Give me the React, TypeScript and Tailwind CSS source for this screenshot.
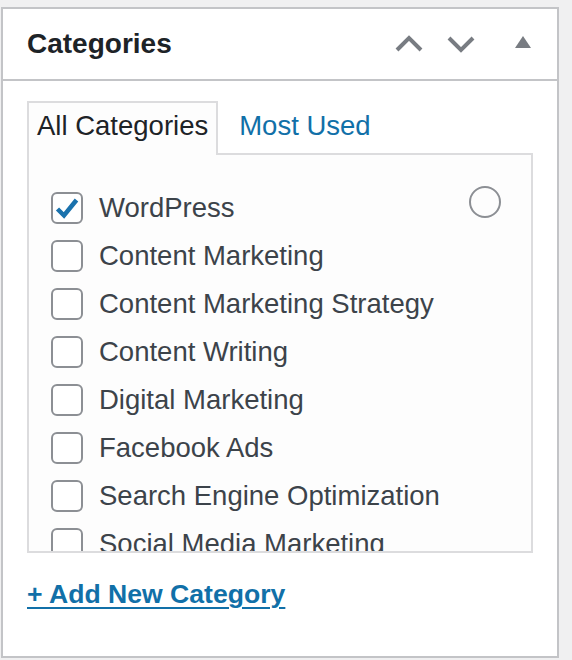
import React from 'react';

const categories = [
  { name: 'WordPress', checked: true },
  { name: 'Content Marketing', checked: false },
  { name: 'Content Marketing Strategy', checked: false },
  { name: 'Content Writing', checked: false },
  { name: 'Digital Marketing', checked: false },
  { name: 'Facebook Ads', checked: false },
  { name: 'Search Engine Optimization', checked: false },
  { name: 'Social Media Marketing', checked: false },
];

const Checkbox: React.FC<{ checked: boolean }> = ({ checked }) => (
  <span className="flex h-[32px] w-[32px] shrink-0 items-center justify-center rounded-[6px] border-2 border-[#8c8f94] bg-white">
    {checked && (
      <svg width="28" height="28" viewBox="0 0 28 28">
        <path d="M4.5 15 L11 21.5 L23.5 6" fill="none" stroke="#1a72ad" strokeWidth="4.5" />
      </svg>
    )}
  </span>
);

export default function App() {
  return (
    <div className="h-[660px] w-[572px] bg-[#f0f0f1] pl-[1px] pt-[7px]" style={{ fontFamily: '"Liberation Sans", Arial, sans-serif' }}>
      <div className="h-[651px] w-[558px] border-2 border-[#c3c4c7] bg-white">
        {/* Header */}
        <div className="flex h-[72px] items-center border-b-2 border-[#c3c4c7] pl-[24px] pr-[26px]">
          <h2 className="flex-1 text-[28px] font-bold text-[#1d2327]">Categories</h2>
          <div className="flex items-center">
            <svg width="28" height="18" viewBox="0 0 28 18" className="mr-[24px]">
              <path d="M2 15 L14 3 L26 15" fill="none" stroke="#787c82" strokeWidth="4" />
            </svg>
            <svg width="28" height="18" viewBox="0 0 28 18" className="mr-[40px]">
              <path d="M2 3 L14 15 L26 3" fill="none" stroke="#787c82" strokeWidth="4" />
            </svg>
            <svg width="16" height="12" viewBox="0 0 16 12" className="mb-[4px]">
              <path d="M8 0 L16 12 L0 12 Z" fill="#787c82" />
            </svg>
          </div>
        </div>

        {/* Body */}
        <div className="pl-[24px] pt-[20px]">
          <div className="flex h-[52px] items-end">
            <div className="-mb-[2px] flex h-[54px] items-center border-2 border-b-0 border-[#dcdcde] bg-[#fdfdfd] px-[8px] pb-[6px] text-[27.5px] text-[#1d2327]">
              All Categories
            </div>
            <a href="#" className="flex h-[52px] items-center pb-[2px] pl-[21px] text-[27.5px] text-[#1170a8]">
              Most Used
            </a>
          </div>
          <div className="h-[400px] w-[506px] overflow-hidden border-2 border-[#dcdcde] bg-[#fdfdfd]">
            <div className="relative pl-[22px] pt-[29px]">
              <span className="absolute right-[30px] top-[31px] h-[32px] w-[32px] rounded-full border-2 border-[#8c8f94]" />
              {categories.map((c) => (
                <label key={c.name} className="flex h-[48px] items-center gap-[16px] text-[27.5px] text-[#3c434a]">
                  <Checkbox checked={c.checked} />
                  <span>{c.name}</span>
                </label>
              ))}
            </div>
          </div>
          <a href="#" className="mt-[22px] inline-block text-[26.6px] font-bold text-[#1170a8] underline decoration-2 underline-offset-[4px]">
            + Add New Category
          </a>
        </div>
      </div>
    </div>
  );
}
